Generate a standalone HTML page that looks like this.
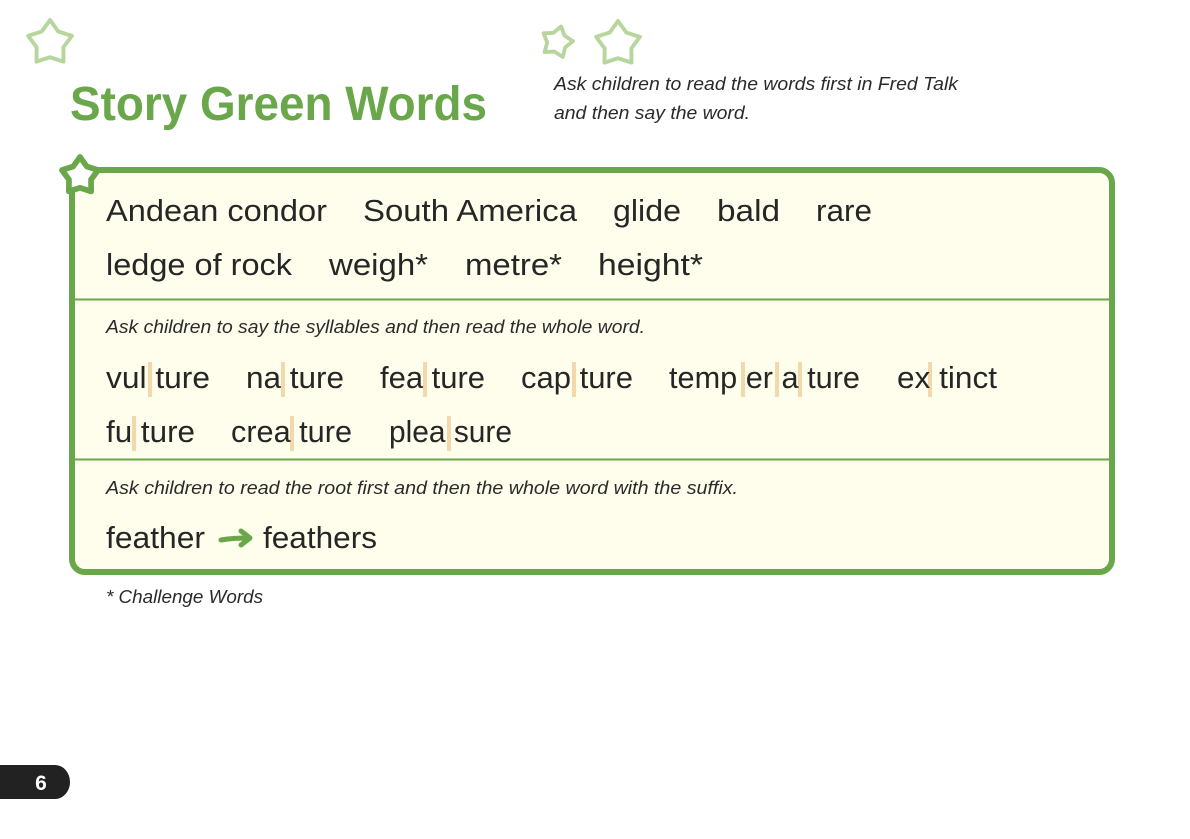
<!DOCTYPE html>
<html><head><meta charset="utf-8"><style>
html,body{margin:0;padding:0;background:#fff;}
svg{display:block}
text{font-family:"Liberation Sans",sans-serif;}
.w{font-size:31px;fill:#262626;}
.i{font-size:18px;fill:#2a2a2a;font-style:italic;}
</style></head><body>
<svg width="1190" height="839" viewBox="0 0 1190 839" xmlns="http://www.w3.org/2000/svg">
<defs>
<polygon id="st" points="0,-1 0.36,-0.50 0.951,-0.309 0.58,0.19 0.588,0.809 0,0.62 -0.588,0.809 -0.58,0.19 -0.951,-0.309 -0.36,-0.50"/>
</defs>
<g fill="none" stroke="#b7d69d" stroke-linejoin="round">
<use href="#st" transform="translate(50,43) scale(23)" style="stroke-width:0.17"/>
<use href="#st" transform="translate(557,42) rotate(15) scale(16)" style="stroke-width:0.24"/>
<use href="#st" transform="translate(618,44) scale(23)" style="stroke-width:0.17"/>
</g>
<text x="70" y="120" style="font-size:48px;font-weight:bold;fill:#6aa64a" textLength="417" lengthAdjust="spacingAndGlyphs">Story Green Words</text>
<text class="i" x="554" y="90" textLength="404" lengthAdjust="spacingAndGlyphs">Ask children to read the words first in Fred Talk</text>
<text class="i" x="554" y="119" textLength="196" lengthAdjust="spacingAndGlyphs">and then say the word.</text>
<rect x="72" y="170" width="1040" height="402" rx="13" fill="#fffdeb" stroke="#6aa64a" stroke-width="6"/>
<line x1="75" y1="299.5" x2="1109" y2="299.5" stroke="#6aa64a" stroke-width="2"/>
<line x1="75" y1="459.5" x2="1109" y2="459.5" stroke="#6aa64a" stroke-width="2"/>
<use href="#st" transform="translate(80,176) scale(19)" fill="#fff" stroke="#6aa64a" stroke-linejoin="round" style="stroke-width:0.3"/>
<g class="w">
<text x="106" y="221" textLength="221" lengthAdjust="spacingAndGlyphs">Andean condor</text>
<text x="363" y="221" textLength="214" lengthAdjust="spacingAndGlyphs">South America</text>
<text x="613" y="221" textLength="68" lengthAdjust="spacingAndGlyphs">glide</text>
<text x="717" y="221" textLength="63" lengthAdjust="spacingAndGlyphs">bald</text>
<text x="816" y="221" textLength="56" lengthAdjust="spacingAndGlyphs">rare</text>
<text x="106" y="275" textLength="186" lengthAdjust="spacingAndGlyphs">ledge of rock</text>
<text x="329" y="275" textLength="99" lengthAdjust="spacingAndGlyphs">weigh*</text>
<text x="465" y="275" textLength="97" lengthAdjust="spacingAndGlyphs">metre*</text>
<text x="598" y="275" textLength="105" lengthAdjust="spacingAndGlyphs">height*</text>
</g>
<text class="i" x="106" y="333" textLength="539" lengthAdjust="spacingAndGlyphs">Ask children to say the syllables and then read the whole word.</text>
<g fill="#f3d8ac">
<rect x="148" y="362" width="4" height="35"/><rect x="281" y="362" width="4" height="35"/><rect x="423" y="362" width="4" height="35"/><rect x="572" y="362" width="4" height="35"/>
<rect x="741" y="362" width="4" height="35"/><rect x="775" y="362" width="4" height="35"/><rect x="798" y="362" width="4" height="35"/><rect x="928" y="362" width="4" height="35"/>
<rect x="132" y="416" width="4" height="35"/><rect x="290" y="416" width="4" height="35"/><rect x="447" y="416" width="4" height="35"/>
</g>
<g class="w">
<text x="106" y="388" textLength="104" lengthAdjust="spacingAndGlyphs">vul ture</text>
<text x="246" y="388" textLength="98" lengthAdjust="spacingAndGlyphs">na ture</text>
<text x="380" y="388" textLength="105" lengthAdjust="spacingAndGlyphs">fea ture</text>
<text x="521" y="388" textLength="112" lengthAdjust="spacingAndGlyphs">cap ture</text>
<text x="669" y="388" textLength="191" lengthAdjust="spacingAndGlyphs">temp er a ture</text>
<text x="897" y="388" textLength="100" lengthAdjust="spacingAndGlyphs">ex tinct</text>
<text x="106" y="442" textLength="89" lengthAdjust="spacingAndGlyphs">fu ture</text>
<text x="231" y="442" textLength="121" lengthAdjust="spacingAndGlyphs">crea ture</text>
<text x="389" y="442" textLength="123" lengthAdjust="spacingAndGlyphs">plea sure</text>
</g>
<text class="i" x="106" y="494" textLength="632" lengthAdjust="spacingAndGlyphs">Ask children to read the root first and then the whole word with the suffix.</text>
<g class="w">
<text x="106" y="548" textLength="99" lengthAdjust="spacingAndGlyphs">feather</text>
<text x="263" y="548" textLength="114" lengthAdjust="spacingAndGlyphs">feathers</text>
</g>
<path d="M221 540 Q232 538 248 538 M241 531 L250 538 L241 545" fill="none" stroke="#6aa64a" stroke-width="5" stroke-linecap="round" stroke-linejoin="round"/>
<text class="i" x="106" y="603" textLength="157" lengthAdjust="spacingAndGlyphs">* Challenge Words</text>
<path d="M0 765 H55 A15 17 0 0 1 70 782 A15 17 0 0 1 55 799 H0 Z" fill="#222"/>
<text x="41" y="790" text-anchor="middle" style="font-size:21px;font-weight:bold;fill:#fff">6</text>
</svg>
</body></html>
